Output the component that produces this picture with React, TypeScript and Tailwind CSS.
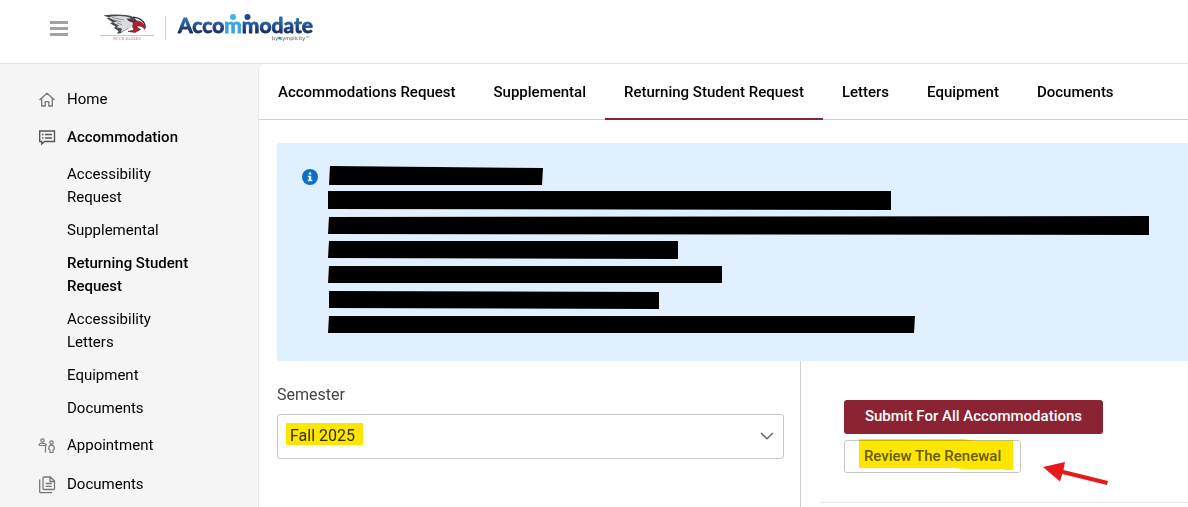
import React from 'react';

const subItems = [
  { label: 'Accessibility Request' },
  { label: 'Supplemental' },
  { label: 'Returning Student Request', active: true },
  { label: 'Accessibility Letters' },
  { label: 'Equipment' },
  { label: 'Documents' },
];

const tabs = [
  { label: 'Accommodations Request' },
  { label: 'Supplemental' },
  { label: 'Returning Student Request', active: true },
  { label: 'Letters' },
  { label: 'Equipment' },
  { label: 'Documents' },
];

const redactions = [
  'ml-px w-[214px] [clip-path:polygon(1px_0,100%_2px,213px_100%,0_100%)]',
  'w-[563px] [clip-path:polygon(0_0,100%_0,100%_100%,0_18px)]',
  'w-[821px] [clip-path:polygon(1px_1px,100%_0,100%_100%,0_18px)]',
  'w-[350px] [clip-path:polygon(1px_0,100%_0,100%_18px,0_17px)]',
  'w-[394px] [clip-path:polygon(1px_0,100%_0,100%_17px,0_17px)]',
  'ml-px w-[330px] [clip-path:polygon(0_0,100%_1px,100%_18px,0_17px)]',
  'w-[587px] [clip-path:polygon(1px_0,100%_0,586px_17px,0_17px)]',
];

function EagleLogo() {
  return (
    <svg viewBox="0 0 54 26" className="h-[26px] w-[54px]" role="img" aria-label="NCCU Eagles">
      <path d="M3.500 1.400 C12 .4 26 -.2 34 3.200 L37 7 L31 13 L24 17 L20 19.600 L17 19.500 L18.500 17 L14 14 L15.500 12.500 L10 9.200 L12.500 8.200 L6.500 4 L10 4 Z" fill="#4a4c4f" />
      <path d="M11 2.600 C19 1.400 27 2 31 4.300 L27 5 L34 9.500 L32 13 L27 14.800 L21 18.300 L22 14.500 L16.500 13.200 L19 11.600 L13 8.600 L17 7.600 L9 3.800 Z" fill="#d9dbdd" />
      <path d="M12 3.400 L24 6 M14 5.800 L21 8 M17 9 L22 10.800" fill="none" stroke="#808285" strokeWidth=".8" />
      <path d="M26 4.300 L33 6.800 L33.500 8.500 L29 7.200 Z" fill="#5a2a32" />
      <path d="M34 7.500 C39 5.500 45 8.500 44.800 15.500 C42.500 11.800 39 11.600 36 12.600 L40.500 15.500 L35 18.500 L28 17.400 L34 16 L32.500 12.500 Z" fill="#b01c30" stroke="#5a1a24" strokeWidth=".6" />
      <path d="M33 3.200 C41 4 45 8 45.400 14" fill="none" stroke="#33292b" strokeWidth="1.200" />
      <path d="M0 21.500 H54" stroke="#dda9b2" strokeWidth=".8" />
      <text x="27" y="25.500" textAnchor="middle" fontFamily="Liberation Serif, serif" fontSize="4" fill="#c0607a">NCCU EAGLES</text>
    </svg>
  );
}

function AccommodateLogo() {
  return (
    <svg viewBox="0 0 142 34" className="h-[34px] w-[142px]" role="img" aria-label="Accommodate by Symplicity">
      <defs>
        <linearGradient id="navy" x1="0" y1="0" x2="0" y2="1">
          <stop offset=".3" stopColor="#2e6db4" />
          <stop offset=".8" stopColor="#1b2f66" />
        </linearGradient>
      </defs>
      <text x="1" y="24" fontFamily="Lato, sans-serif" fontWeight="700" fontSize="21" fill="url(#navy)" stroke="url(#navy)" strokeWidth=".8" strokeLinejoin="round">
        Acco<tspan fill="#3fa4dc" stroke="#3fa4dc">m</tspan>modate
      </text>
      <circle cx="56" cy="8" r="3" fill="#45b4e4" />
      <circle cx="70.500" cy="8" r="3" fill="#1f4685" />
      <text x="95" y="30.500" fontFamily="DejaVu Sans, sans-serif" fontSize="5" fill="#444">by  symplicity™</text>
      <circle cx="102.500" cy="29" r="1.500" fill="#2499dc" />
    </svg>
  );
}

const iconClass = 'size-[18px] shrink-0 fill-none stroke-[#777] [stroke-linejoin:round]';

function HomeIcon() {
  return (
    <svg viewBox="0 0 18 18" className={iconClass} strokeWidth="1.3" aria-hidden="true">
      <path d="M1.500 9 L9 2.300 L16.500 9 M3.700 7.500 V15 H7.200 V10.700 H10.800 V15 H14.300 V7.500" />
    </svg>
  );
}

function AccommodationIcon() {
  return (
    <svg viewBox="0 0 18 18" className="size-[18px] shrink-0 fill-none stroke-[#555]" strokeWidth="1.4" aria-hidden="true">
      <path d="M1.700 2 H16.500 V12.500 H6.500 L3.700 15 V12.500 H1.700 Z M4 5.500 H5.500 M7 5.500 H14 M4 9 H5.500 M7 9 H14" />
    </svg>
  );
}

function AppointmentIcon() {
  return (
    <svg viewBox="0 0 18 18" className={iconClass} strokeWidth="1.2" aria-hidden="true">
      <circle cx="4.500" cy="3.500" r="1.700" />
      <path d="M1.200 8.500 V7.500 Q1.200 6.500 2.200 6.500 H6.500 L9 8 M1.200 8.500 H7.500 V15.500" />
      <circle cx="13.500" cy="5.500" r="1.700" />
      <path d="M13.500 8.200 C11.500 8.200 10.500 10 10.700 12 L12 13 V15.500 H15 V13 L16.300 12 C16.500 10 15.500 8.200 13.500 8.200 Z" />
    </svg>
  );
}

function DocumentsIcon() {
  return (
    <svg viewBox="0 0 18 18" className={iconClass} strokeWidth="1.3" aria-hidden="true">
      <path d="M6 1 H12.500 L16.500 5 V12.500 Q16.500 13.500 15.500 13.500 H6 Q5 13.500 5 12.500 V2 Q5 1 6 1 Z M12 1 V5.500 H16.500 M7.700 7.500 H13.700 M7.700 10.300 H13.700 M1.700 3.500 V15.700 Q1.700 16.700 2.700 16.700 H14" />
    </svg>
  );
}

function NavLink({ icon, label, active }: { icon: React.ReactNode; label: string; active?: boolean }) {
  return (
    <a href="#" className={active ? 'flex items-center gap-[11px] font-medium' : 'flex items-center gap-[11px]'}>
      {icon}
      {label}
    </a>
  );
}

export default function App() {
  return (
    <div className="flex min-h-screen flex-col overflow-x-hidden bg-white font-[Roboto,sans-serif] text-[15px] leading-[23px] text-black">
      <header className="flex h-16 items-start border-b border-[#e4e4e4] pl-[50px]">
        <button type="button" aria-label="Toggle menu" className="mt-[21px] flex w-[18px] flex-col gap-[3px]">
          <span className="h-[3px] bg-[#a3a3a3]" />
          <span className="h-[3px] bg-[#a3a3a3]" />
          <span className="h-[3px] bg-[#a3a3a3]" />
        </button>
        <a href="#" className="mt-[14px] ml-8">
          <EagleLogo />
        </a>
        <span className="mt-4 ml-[11px] h-6 w-px bg-[#d4d4d4]" />
        <a href="#" className="mt-[9px] ml-[11px]">
          <AccommodateLogo />
        </a>
      </header>

      <div className="flex grow bg-[#f5f5f5]">
        <nav aria-label="Main" className="w-[258px] shrink-0 pt-6 pb-3 pl-[38px]">
          <div className="flex flex-col gap-[15px]">
            <NavLink icon={<HomeIcon />} label="Home" />
            <NavLink icon={<AccommodationIcon />} label="Accommodation" active />
          </div>
          <ul className="mt-[14px] flex w-[164px] flex-col gap-[10px] pl-[29px]">
            {subItems.map((item) => (
              <li key={item.label} className={item.active ? 'font-medium' : 'w-[100px]'}>
                <a href="#">{item.label}</a>
              </li>
            ))}
          </ul>
          <div className="mt-[14px] flex flex-col gap-4">
            <NavLink icon={<AppointmentIcon />} label="Appointment" />
            <NavLink icon={<DocumentsIcon />} label="Documents" />
          </div>
        </nav>

        <main className="flex min-w-0 grow flex-col rounded-tl-md border-l border-[#e8e8e8] bg-white">
          <nav aria-label="Sections" className="flex h-14 border-b border-[#cfcfcf] font-medium">
            {tabs.map((tab) => (
              <a
                key={tab.label}
                href="#"
                className={
                  tab.active
                    ? '-mb-px flex items-center border-b-2 border-[#8c2332] px-[19px] pt-0.5 whitespace-nowrap'
                    : 'flex items-center px-[19px] pt-0.5 whitespace-nowrap'
                }
              >
                {tab.label}
              </a>
            ))}
          </nav>

          <section className="mt-[23px] ml-[18px] flex h-[218px] shrink-0 gap-[10px] rounded-l-[3px] bg-[#e0f0ff] pt-[23px] pl-[25px]">
            <svg viewBox="0 0 16 16" className="mt-[3px] size-4 shrink-0" role="img" aria-label="Information">
              <circle cx="8" cy="8" r="8" fill="#0d6fc8" />
              <path d="M6.800 3.500 H9.200 V5.500 H6.800 Z M5.800 6.700 H9.200 V10.700 H10.300 V12.200 H5.700 V10.700 H6.800 V8.100 H5.800 Z" fill="#e8f2fb" />
            </svg>
            <div className="flex flex-col gap-[6px]">
              {redactions.map((shape) => (
                <div key={shape} className={`h-[19px] bg-black ${shape}`} />
              ))}
            </div>
          </section>

          <div className="grid grow grid-cols-[7fr_5fr]">
            <div className="border-r border-[#cfcfcf] pt-[22px] pr-4 pl-[18px]">
              <label htmlFor="semester" className="block text-[16px] text-[#444]">
                Semester
              </label>
              <div className="relative mt-2">
                <select
                  id="semester"
                  className="block h-[45px] w-full appearance-none rounded-[3px] border border-[#c8c8c8] bg-white pr-10 pb-[3px] pl-3 text-[16px] text-[#333]"
                >
                  <option>Fall 2025</option>
                </select>
                <span className="pointer-events-none absolute top-[9px] left-[9px] h-[22px] w-[77px] bg-[#ffe600] mix-blend-multiply" />
                <svg viewBox="0 0 14 8" className="pointer-events-none absolute top-[18px] right-[10px] h-2 w-[14px]" aria-hidden="true">
                  <path d="M1 1 L7 6.800 L13 1" fill="none" stroke="#666" strokeWidth="1.500" />
                </svg>
              </div>
            </div>

            <div className="pt-[39px] pl-[19px]">
              <div className="relative flex flex-col items-start gap-[6px] pb-[29px] pl-6">
                <button type="button" className="h-[34px] rounded-[3px] bg-[#8c2332] px-[21px] pb-[2px] text-[15px] font-medium whitespace-nowrap text-white">
                  Submit For All Accommodations
                </button>
                <button
                  type="button"
                  className="relative h-[33px] rounded-[3px] border border-[#c8c8c8] bg-white px-[19px] pb-px text-[15px] font-medium whitespace-nowrap text-[#666]"
                >
                  Review The Renewal
                  <svg viewBox="0 0 154 31" className="pointer-events-none absolute -top-[2px] left-[14px] h-[31px] w-[154px] mix-blend-multiply" aria-hidden="true">
                    <path d="M0 0 H104 L114 1.500 H154 V31 H146 L142 30 H104 L96 29 H0 Z" fill="#ffe600" />
                  </svg>
                </button>
                <svg viewBox="0 0 66 24" className="pointer-events-none absolute top-[62px] left-[223px] h-6 w-[66px]" aria-hidden="true">
                  <path d="M0 5 L22 0 L20.500 8 L65 19 L64 23 L19.300 12 L17 19.500 Z" fill="#e8191c" />
                </svg>
              </div>
              <hr className="border-[#e8e8e8]" />
            </div>
          </div>
        </main>
      </div>
    </div>
  );
}
